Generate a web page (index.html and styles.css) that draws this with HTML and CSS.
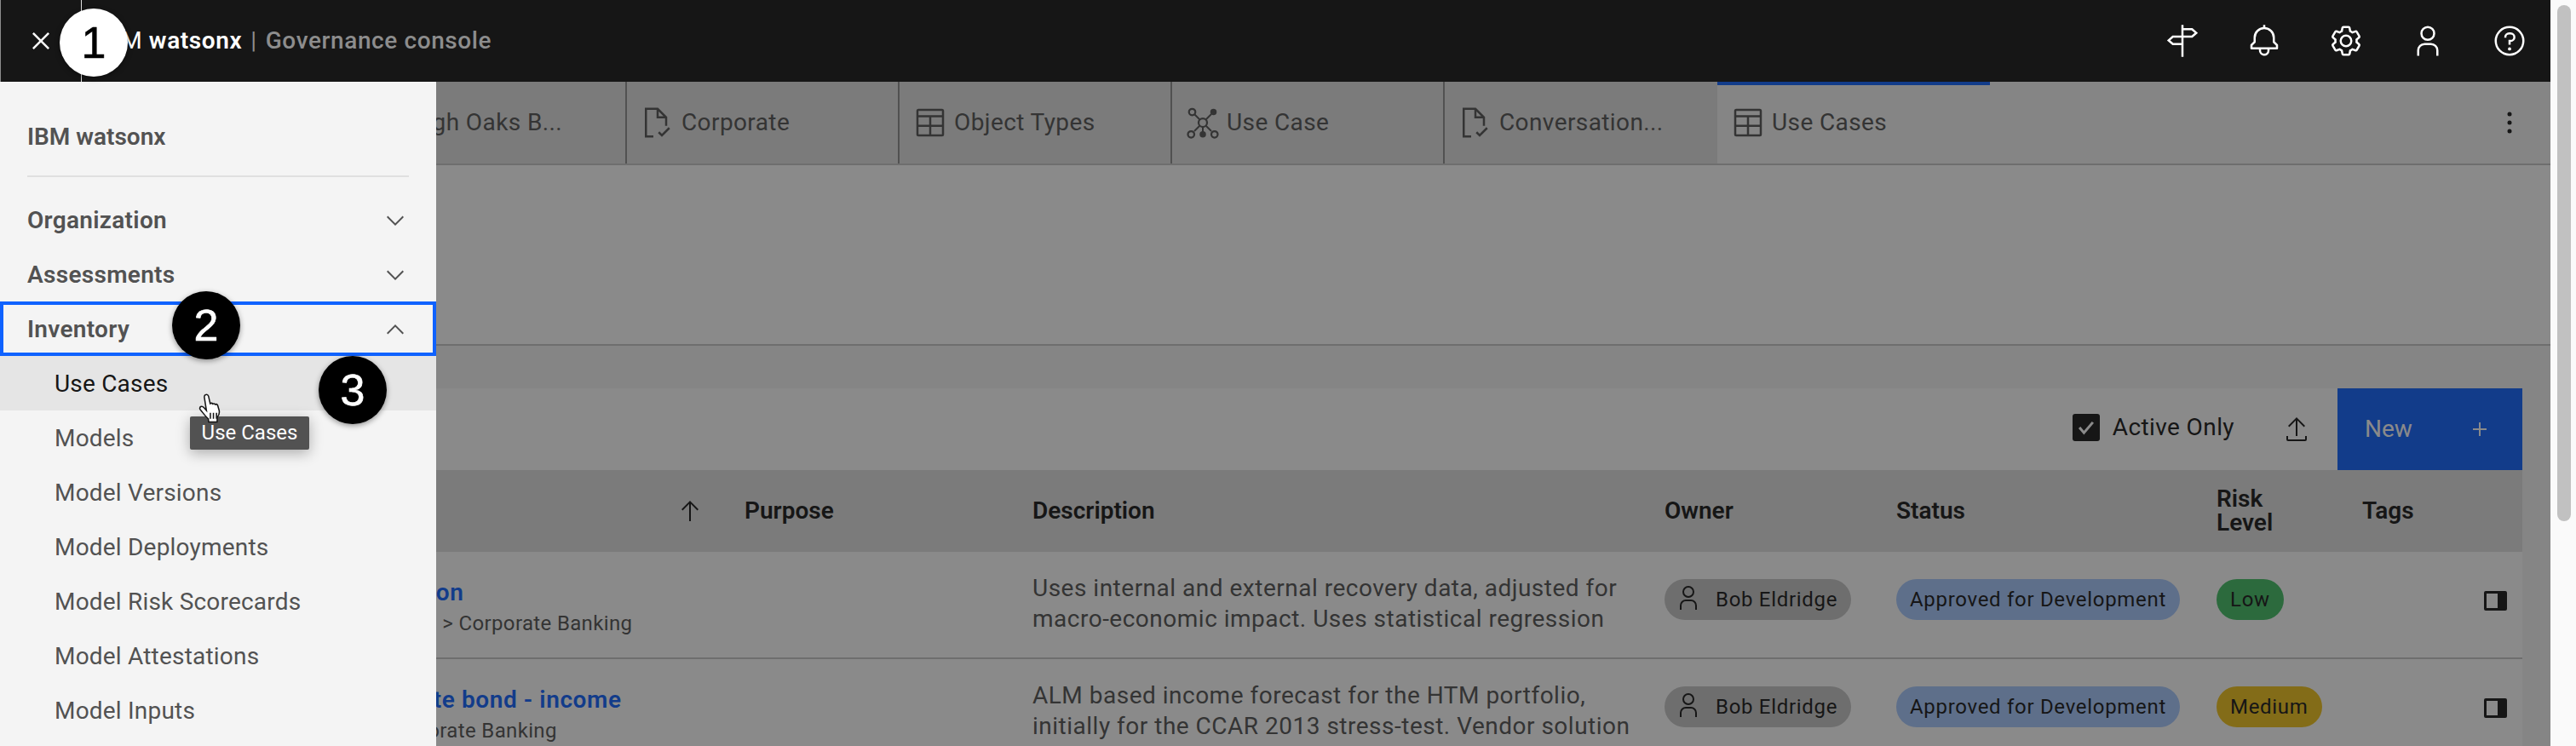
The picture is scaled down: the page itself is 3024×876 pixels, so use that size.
FILE: index.html
```html
<!DOCTYPE html>
<html lang="en">
<head>
  <meta charset="UTF-8">
  <title>Use Cases - IBM watsonx Governance console</title>
  <link rel="stylesheet" href="styles.css">
</head>
<body>
  <div class="app">
    <div class="main">
      <header class="top-bar">
        <button class="menu-btn">
          <svg class="icon" viewBox="0 0 32 32"><path d="M17.41 16L24 9.41 22.59 8 16 14.59 9.41 8 8 9.41 14.59 16 8 22.59 9.41 24 16 17.41 22.59 24 24 22.59z"/></svg>
        </button>
        <div class="brand"><span>IBM <b>watsonx</b></span><i class="brand-sep">|</i><em>Governance console</em></div>
        <div class="top-actions">
          <svg class="icon" viewBox="0 0 32 32"><path class="line" d="M16 1v30M16 5h9l4 3.500-4 3.500h-9M16 12H7l-4 3.500L7 19h9"/></svg>
          <svg class="icon" viewBox="0 0 32 32"><path d="M28.71 19.29L26 16.59V13a10.01 10.01 0 0 0-9-9.95V1h-2v2.05A10.01 10.01 0 0 0 6 13v3.59l-2.71 2.7A1 1 0 0 0 3 20v3a1 1 0 0 0 1 1h7v.78a5.15 5.15 0 0 0 4.5 5.2A5.01 5.01 0 0 0 21 25v-1h7a1 1 0 0 0 1-1v-3a1 1 0 0 0-.29-.71zM19 25a3 3 0 0 1-6 0v-1h6zm8-3H5v-1.59l2.71-2.7A1 1 0 0 0 8 17v-4a8 8 0 0 1 16 0v4a1 1 0 0 0 .29.71l2.71 2.7z"/></svg>
          <svg class="icon" viewBox="0 0 32 32"><path d="M27 16.76v-1.53l1.92-1.68A2 2 0 0 0 29.3 11l-2.36-4a2 2 0 0 0-1.73-1 2 2 0 0 0-.64.1l-2.43.82a11.35 11.35 0 0 0-1.31-.75l-.51-2.52a2 2 0 0 0-2-1.61h-4.68a2 2 0 0 0-2 1.61l-.51 2.52a11.48 11.48 0 0 0-1.32.75L7.43 6.06A2 2 0 0 0 6.79 6a2 2 0 0 0-1.73 1L2.7 11a2 2 0 0 0 .41 2.51L5 15.24v1.53l-1.89 1.68A2 2 0 0 0 2.7 21l2.36 4a2 2 0 0 0 1.73 1 2 2 0 0 0 .64-.1l2.43-.82a11.35 11.35 0 0 0 1.31.75l.51 2.52a2 2 0 0 0 2 1.61h4.72a2 2 0 0 0 2-1.61l.51-2.52a11.48 11.48 0 0 0 1.32-.75l2.42.82a2 2 0 0 0 .64.1 2 2 0 0 0 1.73-1l2.28-4a2 2 0 0 0-.41-2.51zM25.21 24l-3.43-1.16a8.86 8.86 0 0 1-2.71 1.57L18.36 28h-4.72l-.71-3.55a9.36 9.36 0 0 1-2.7-1.57L6.79 24l-2.36-4 2.72-2.4a8.9 8.9 0 0 1 0-3.13L4.43 12l2.36-4 3.43 1.16a8.86 8.86 0 0 1 2.71-1.57L13.64 4h4.72l.71 3.55a9.36 9.36 0 0 1 2.7 1.57L25.21 8l2.36 4-2.72 2.4a8.9 8.9 0 0 1 0 3.13L27.57 20z"/><path d="M16 22a6 6 0 1 1 6-6 5.94 5.94 0 0 1-6 6zm0-10a3.91 3.91 0 0 0-4 4 3.91 3.91 0 0 0 4 4 3.91 3.91 0 0 0 4-4 3.91 3.91 0 0 0-4-4z"/></svg>
          <svg class="icon" viewBox="0 0 32 32"><path d="M16 4a5 5 0 1 1-5 5 5 5 0 0 1 5-5m0-2a7 7 0 1 0 7 7 7 7 0 0 0-7-7zM26 30h-2v-5a5 5 0 0 0-5-5h-6a5 5 0 0 0-5 5v5H6v-5a7 7 0 0 1 7-7h6a7 7 0 0 1 7 7z"/></svg>
          <svg class="icon" viewBox="0 0 32 32"><path d="M16 2a14 14 0 1 0 14 14A14 14 0 0 0 16 2zm0 26a12 12 0 1 1 12-12 12 12 0 0 1-12 12z"/><circle cx="16" cy="23.5" r="1.5"/><path d="M17 8h-1.5a4.49 4.49 0 0 0-4.5 4.5v.5h2v-.5a2.5 2.5 0 0 1 2.5-2.5H17a2.5 2.5 0 0 1 0 5h-2v4.5h2V17a4.5 4.5 0 0 0 0-9z"/></svg>
        </div>
      </header>

      <div class="content">
        <nav class="tabs">
          <div class="tab"><svg class="icon" viewBox="0 0 32 32"><path class="line" d="M12 29H5V3h11l8 8v8M16 3v8h8M17 25l3 3 7-7"/></svg><span>Dashboard</span></div>
          <div class="tab"><svg class="icon" viewBox="0 0 32 32"><path class="line" d="M12 29H5V3h11l8 8v8M16 3v8h8M17 25l3 3 7-7"/></svg><span>High Oaks B...</span></div>
          <div class="tab"><svg class="icon" viewBox="0 0 32 32"><path class="line" d="M12 29H5V3h11l8 8v8M16 3v8h8M17 25l3 3 7-7"/></svg><span>Corporate</span></div>
          <div class="tab"><svg class="icon" viewBox="0 0 32 32"><path d="M27 3H5a2 2 0 0 0-2 2v22a2 2 0 0 0 2 2h22a2 2 0 0 0 2-2V5a2 2 0 0 0-2-2zm0 2v4H5V5zM17 11h10v7H17zm-2 7H5v-7h10zM5 20h10v7H5zm12 7v-7h10v7z"/></svg><span>Object Types</span></div>
          <div class="tab"><svg class="icon" viewBox="0 0 32 32"><path class="line thin" d="M8 8l16 16M24 8L8 24M16 16v9"/><circle class="dot-open" cx="6" cy="6" r="3"/><circle cx="26" cy="6" r="3"/><circle class="dot-open" cx="16" cy="16" r="4"/><circle class="dot-open" cx="5" cy="27" r="3"/><circle cx="16" cy="27" r="3"/><circle class="dot-open" cx="27" cy="27" r="3"/></svg><span>Use Case</span></div>
          <div class="tab before-active"><svg class="icon" viewBox="0 0 32 32"><path class="line" d="M12 29H5V3h11l8 8v8M16 3v8h8M17 25l3 3 7-7"/></svg><span>Conversation...</span></div>
          <div class="tab active"><svg class="icon" viewBox="0 0 32 32"><path d="M27 3H5a2 2 0 0 0-2 2v22a2 2 0 0 0 2 2h22a2 2 0 0 0 2-2V5a2 2 0 0 0-2-2zm0 2v4H5V5zM17 11h10v7H17zm-2 7H5v-7h10zM5 20h10v7H5zm12 7v-7h10v7z"/></svg><span>Use Cases</span></div>
          <svg class="tabs-more" viewBox="0 0 32 32"><circle cx="16" cy="8" r="2"/><circle cx="16" cy="16" r="2"/><circle cx="16" cy="24" r="2"/></svg>
        </nav>

        <div class="title-area"></div>

        <div class="list">
          <div class="toolbar">
            <label class="active-only">
              <span class="checkbox"><svg viewBox="0 0 32 32"><path d="M7 16l6 7 12-14"/></svg></span>
              Active Only
            </label>
            <svg class="export-icon" viewBox="0 0 32 32"><path d="M26 24v4H6v-4H4v4a2 2 0 0 0 2 2h20a2 2 0 0 0 2-2v-4z"/><path d="M6 12l1.41 1.41L15 5.83V24h2V5.83l7.59 7.58L26 12 16 2z"/></svg>
            <button class="new-btn">New
              <svg viewBox="0 0 32 32"><path d="M17 15V8h-2v7H8v2h7v7h2v-7h7v-2z"/></svg>
            </button>
          </div>

          <table class="grid">
            <colgroup>
              <col class="c-name"><col class="c-purpose"><col class="c-desc"><col class="c-owner"><col class="c-status"><col class="c-risk"><col class="c-tags"><col class="c-act">
            </colgroup>
            <thead>
              <tr>
                <th class="th-name"><div class="th-sort">Name<svg viewBox="0 0 32 32"><path d="M16 4L6 14l1.41 1.41L15 7.83V28h2V7.83l7.59 7.58L26 14z"/></svg></div></th>
                <th>Purpose</th>
                <th>Description</th>
                <th>Owner</th>
                <th>Status</th>
                <th>Risk<br>Level</th>
                <th>Tags</th>
                <th></th>
              </tr>
            </thead>
            <tbody>
              <tr>
                <td class="name-cell">
                  <a class="case-name">Estimation</a>
                  <div class="case-path">Securities &gt; Corporate Banking</div>
                </td>
                <td></td>
                <td class="desc">Uses internal and external recovery data, adjusted for macro-economic impact. Uses statistical regression</td>
                <td><span class="pill pill-owner"><svg viewBox="0 0 32 32"><path d="M16 4a5 5 0 1 1-5 5 5 5 0 0 1 5-5m0-2a7 7 0 1 0 7 7 7 7 0 0 0-7-7zM26 30h-2v-5a5 5 0 0 0-5-5h-6a5 5 0 0 0-5 5v5H6v-5a7 7 0 0 1 7-7h6a7 7 0 0 1 7 7z"/></svg>Bob Eldridge</span></td>
                <td><span class="pill pill-status">Approved for Development</span></td>
                <td><span class="pill pill-low">Low</span></td>
                <td></td>
                <td><div class="row-panel"></div></td>
              </tr>
              <tr>
                <td class="name-cell">
                  <a class="case-name">Corporate bond - income</a>
                  <div class="case-path">FI &gt; Corporate Banking</div>
                </td>
                <td></td>
                <td class="desc">ALM based income forecast for the HTM portfolio, initially for the CCAR 2013 stress-test. Vendor solution</td>
                <td><span class="pill pill-owner"><svg viewBox="0 0 32 32"><path d="M16 4a5 5 0 1 1-5 5 5 5 0 0 1 5-5m0-2a7 7 0 1 0 7 7 7 7 0 0 0-7-7zM26 30h-2v-5a5 5 0 0 0-5-5h-6a5 5 0 0 0-5 5v5H6v-5a7 7 0 0 1 7-7h6a7 7 0 0 1 7 7z"/></svg>Bob Eldridge</span></td>
                <td><span class="pill pill-status">Approved for Development</span></td>
                <td><span class="pill pill-medium">Medium</span></td>
                <td></td>
                <td><div class="row-panel"></div></td>
              </tr>
            </tbody>
          </table>
        </div>

        <div class="scrim"></div>

        <aside class="side-panel">
          <div class="panel-title">IBM watsonx</div>
          <div class="panel-rule"></div>
          <div class="nav-head">Organization<svg viewBox="0 0 32 32"><path d="M16 22L6 12l1.4-1.4 8.6 8.6 8.6-8.6L26 12z"/></svg></div>
          <div class="nav-head">Assessments<svg viewBox="0 0 32 32"><path d="M16 22L6 12l1.4-1.4 8.6 8.6 8.6-8.6L26 12z"/></svg></div>
          <div class="nav-head focused">Inventory<svg viewBox="0 0 32 32"><path d="M16 10l10 10-1.4 1.4-8.6-8.6-8.6 8.6L6 20z"/></svg></div>
          <div class="nav-item hovered">Use Cases</div>
          <div class="nav-item">Models</div>
          <div class="nav-item">Model Versions</div>
          <div class="nav-item">Model Deployments</div>
          <div class="nav-item">Model Risk Scorecards</div>
          <div class="nav-item">Model Attestations</div>
          <div class="nav-item">Model Inputs</div>
        </aside>
      </div>

      <div class="tooltip">Use Cases</div>
      <svg class="hand" viewBox="0 0 32 36"><path d="M9 2.500c1.600-.8 3 .2 3.400 1.800l1.900 8.200c1-.7 2.300-.5 3 .5.9-.6 2.200-.3 2.800.6 1-.5 2.200-.1 2.700.9l1.600 5.500c.8 3-.2 6-2 8l-.2 5.500H12.500l-.3-3.500C9.500 28 6 23 3 19.500c-1-1.300-.6-2.800.5-3.400 1.200-.6 2.500-.1 3.500 1l3 3.400L7.700 6c-.3-1.500 0-2.900 1.300-3.500z"/><path d="M14.500 23v7M18 23v7M21.500 23v7"/></svg>
      <div class="marker m1">1</div>
      <div class="marker dark m2">2</div>
      <div class="marker dark m3">3</div>
    </div>

    <div class="scrollbar"><div class="scroll-thumb"></div></div>
  </div>
</body>
</html>
```

FILE: styles.css
```css
* {
  margin: 0;
  padding: 0;
  box-sizing: border-box;
}

html, body {
  width: 100%;
  height: 100%;
  overflow: hidden;
  background: #fafafa;
  font-family: "Roboto", "Noto Sans", sans-serif;
  font-size: 28px;
  line-height: 36px;
  color: #161616;
}

.app {
  display: flex;
  height: 100vh;
}

.main {
  position: relative;
  flex: 1;
  min-width: 0;
  display: flex;
  flex-direction: column;
}

.scrollbar {
  width: 30px;
  padding: 6px 6px 0 8px;
  background: #fafafa;
}

.scroll-thumb {
  height: 606px;
  background: #c1c1c1;
  border-radius: 8px;
}

.icon {
  width: 40px;
  height: 40px;
  fill: currentColor;
  flex: none;
}

.line {
  fill: none;
  stroke: currentColor;
  stroke-width: 2;
}

.thin {
  stroke-width: 1.6;
}

.dot-open {
  fill: #e0e0e0;
  stroke: currentColor;
  stroke-width: 1.8;
}

/* top bar */
.top-bar {
  height: 96px;
  flex: none;
  display: flex;
  align-items: center;
  background: #161616;
  color: #fff;
}

.menu-btn {
  width: 96px;
  height: 96px;
  display: flex;
  align-items: center;
  justify-content: center;
  background: none;
  border: 0;
  border-left: 1px solid #8d8d8d;
  border-right: 1px solid #e0e0e0;
  color: #fff;
}

.brand {
  display: flex;
  align-items: center;
  padding-left: 20px;
  white-space: nowrap;
  letter-spacing: 0.6px;
}

.brand b {
  font-weight: 600;
}

.brand-sep {
  font-style: normal;
  color: #8d8d8d;
  margin: 0 10px;
}

.brand em {
  font-style: normal;
  font-weight: 500;
  color: #8d8d8d;
}

.top-actions {
  margin-left: auto;
  display: flex;
  gap: 56px;
  padding-right: 28px;
}

/* everything under the top bar, dimmed by the scrim */
.content {
  position: relative;
  flex: 1;
  min-height: 0;
  overflow: hidden;
  background: #f4f4f4;
}

.tabs {
  height: 96px;
  padding-left: 96px;
  display: flex;
  align-items: stretch;
  letter-spacing: 0.4px;
}

.tab {
  width: 320px;
  padding-left: 16px;
  display: flex;
  align-items: center;
  gap: 8px;
  background: #e0e0e0;
  border-right: 2px solid #8d8d8d;
  color: #525252;
}

.tab.before-active {
  border-right: 0;
}

.tab.active {
  background: #f4f4f4;
  border-right: 0;
  border-top: 4px solid #0f62fe;
  color: #525252;
  padding-bottom: 4px;
}

.tabs-more {
  width: 40px;
  height: 40px;
  margin: auto 28px auto auto;
  fill: #161616;
}

.title-area {
  height: 214px;
  background: #fff;
  border-top: 2px solid #c6c6c6;
  border-bottom: 2px solid #c6c6c6;
}

.list {
  padding: 50px 33px 0 128px;
}

.toolbar {
  height: 96px;
  display: flex;
  align-items: center;
  justify-content: flex-end;
  background: #fff;
}

.active-only {
  display: flex;
  align-items: center;
  gap: 15px;
  margin-bottom: 4px;
  letter-spacing: 0.4px;
}

.checkbox {
  width: 32px;
  height: 32px;
  background: #161616;
  border-radius: 3px;
  display: flex;
  align-items: center;
  justify-content: center;
}

.checkbox svg {
  width: 28px;
  height: 28px;
  fill: none;
  stroke: #fff;
  stroke-width: 3.5;
}

.export-icon {
  width: 32px;
  height: 32px;
  margin: 0 32px 0 57px;
  fill: #161616;
}

.new-btn {
  width: 217px;
  height: 96px;
  padding: 0 34px 0 32px;
  display: flex;
  align-items: center;
  justify-content: space-between;
  border: 0;
  background: #0f62fe;
  color: #fff;
  font: inherit;
}

.new-btn svg {
  width: 32px;
  height: 32px;
  fill: #fff;
}

/* table */
.grid {
  width: 2833px;
  table-layout: fixed;
  border-collapse: collapse;
}

.c-name { width: 730px; }
.c-purpose { width: 338px; }
.c-desc { width: 742px; }
.c-owner { width: 272px; }
.c-status { width: 376px; }
.c-risk { width: 171px; }
.c-tags { width: 133px; }
.c-act { width: 71px; }

.grid th {
  height: 96px;
  padding: 0 0 0 16px;
  background: #e0e0e0;
  text-align: left;
  font-weight: 600;
  line-height: 28px;
}

.th-sort {
  display: flex;
  align-items: center;
  justify-content: space-between;
  padding-right: 32px;
}

.th-sort svg {
  width: 32px;
  height: 32px;
  fill: #161616;
}

.th-name {
  padding-left: 272px !important;
}

.grid td {
  height: 125px;
  padding: 32px 0 0 16px;
  vertical-align: top;
  background: #fff;
  border-bottom: 2px solid #c6c6c6;
  color: #525252;
}

.grid td.desc {
  padding-top: 25px;
  letter-spacing: 0.5px;
}

.grid td.name-cell {
  padding: 30px 0 0 276px;
  white-space: nowrap;
}

.case-name {
  display: block;
  color: #0f62fe;
  font-weight: 600;
  letter-spacing: 0.6px;
}

.case-path {
  font-size: 24px;
  line-height: 36px;
  letter-spacing: 0.35px;
}

.pill {
  display: inline-flex;
  align-items: center;
  height: 48px;
  padding: 0 16px;
  border-radius: 24px;
  font-size: 24px;
  color: #161616;
  white-space: nowrap;
  letter-spacing: 0.7px;
}

.pill-owner {
  padding-left: 18px;
  background: #c6c6c6;
  gap: 16px;
}

.pill-owner svg {
  width: 32px;
  height: 32px;
  margin: -4px 0 0 -6px;
  fill: #161616;
}

.pill-status { background: #a6c8ff; }
.pill-low { background: #42be65; }
.pill-medium { background: #f1c21b; }

.row-panel {
  width: 27px;
  height: 23px;
  margin: 14px 0 0 10px;
  border: 3px solid #161616;
  border-right-width: 11px;
  border-radius: 2px;
}

/* dim layer and side nav */
.scrim {
  position: absolute;
  inset: 0;
  background: rgba(22, 22, 22, 0.5);
}

.side-panel {
  position: absolute;
  top: 0;
  left: 0;
  bottom: 0;
  width: 512px;
  background: #f4f4f4;
  color: #525252;
}

.panel-title {
  height: 110px;
  padding: 47px 32px 0;
  line-height: 36px;
  font-weight: 600;
}

.panel-rule {
  height: 2px;
  margin: 0 32px 18px;
  background: #e0e0e0;
}

.nav-head {
  height: 64px;
  padding: 2px 32px 0;
  display: flex;
  align-items: center;
  justify-content: space-between;
  font-weight: 600;
  letter-spacing: 0.3px;
}

.nav-head svg {
  width: 32px;
  height: 32px;
  fill: #525252;
}

.nav-head.focused {
  outline: 4px solid #0f62fe;
  outline-offset: -4px;
}

.nav-item {
  height: 64px;
  padding: 2px 32px 0 64px;
  display: flex;
  align-items: center;
  letter-spacing: 0.2px;
}

.nav-item.hovered {
  background: #e5e5e5;
  color: #161616;
}

/* overlays on top of the shot */
.tooltip {
  position: absolute;
  left: 223px;
  top: 489px;
  width: 140px;
  height: 39px;
  background: #525252;
  border-radius: 2px;
  box-shadow: 0 4px 16px rgba(0, 0, 0, 0.3);
  color: #fff;
  font-size: 24px;
  line-height: 38px;
  text-align: center;
}

.hand {
  position: absolute;
  left: 232px;
  top: 461px;
  width: 33px;
  height: 37px;
  fill: #fff;
  stroke: #161616;
  stroke-width: 1.5;
}

.marker {
  position: absolute;
  width: 80px;
  height: 80px;
  border-radius: 50%;
  background: #fff;
  color: #000;
  box-shadow: 0 2px 6px rgba(0, 0, 0, 0.4);
  font-family: "Liberation Sans", sans-serif;
  font-size: 52px;
  line-height: 80px;
  text-align: center;
  -webkit-text-stroke: 0.6px currentColor;
}

.marker.dark {
  background: #000;
  color: #fff;
}

.m1 { left: 70px; top: 10px; }
.m2 { left: 202px; top: 342px; }
.m3 { left: 374px; top: 418px; }
```
